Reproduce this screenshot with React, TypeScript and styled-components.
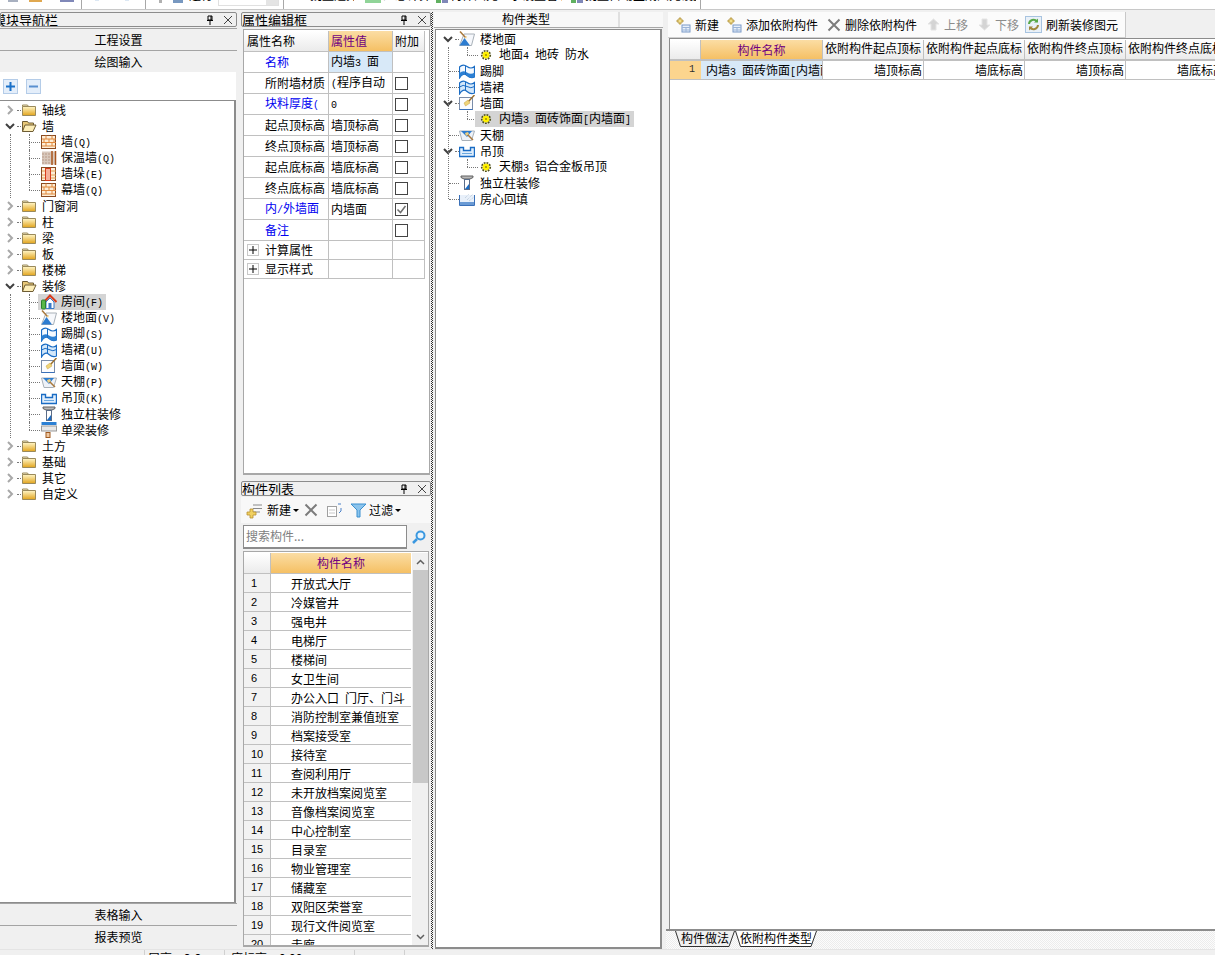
import React from 'react';
import styled, { createGlobalStyle } from 'styled-components';

const Global = createGlobalStyle`
  html, body { margin: 0; padding: 0; background: #f0f0f0; overflow: hidden; }
  * { box-sizing: border-box; }
  body { font: 12px/16px "Noto Sans CJK SC", "Liberation Sans", sans-serif; color: #000; }
`;

const Page = styled.div`
  width: 1215px; height: 955px; display: flex; flex-direction: column; overflow: hidden; background: #f0f0f0;
`;

/* ---------- clipped top toolbar ---------- */
const TopBar = styled.div`
  height: 10px; flex: none; display: flex; align-items: flex-start; background: #fff; border-bottom: 1px solid #c8c8c8; overflow: hidden;
`;
const TopChip = styled.div<{ $ml: number; $w: number; $c: string; $h?: number }>`
  margin-left: ${p => p.$ml}px; width: ${p => p.$w}px; height: ${p => p.$h ?? 3}px; background: ${p => p.$c}; flex: none;
`;
const TopSep = styled.div<{ $ml: number }>`
  margin-left: ${p => p.$ml}px; width: 1px; height: 9px; background: #a8a8a8; flex: none;
`;
const TopText = styled.div<{ $ml: number; $w: number }>`
  margin-left: ${p => p.$ml}px; width: ${p => p.$w}px; height: 2px; overflow: hidden; flex: none; white-space: nowrap;
  & > span { display: block; margin-top: -11px; line-height: 12px; }
`;
const TopInput = styled.div`
  margin-left: 3px; width: 61px; height: 6px; border: 1px solid #e0e0e0; border-top: 0; display: flex; justify-content: flex-end; flex: none;
  & > i { display: block; width: 12px; background: #e4e4e4; }
`;

const Main = styled.div`
  flex: 1; min-height: 0; display: flex; padding-top: 2px;
`;

/* ---------- common ---------- */
const TitleBar = styled.div<{ $indent: number }>`
  height: 15px; flex: none; display: flex; align-items: center; border: 1px solid #8c8c8c; border-radius: 2px;
  padding-right: 3px; background: #f0f0f0; font-size: 13px; overflow: hidden; white-space: nowrap;
  & > b { font-weight: 400; flex: 1; margin-left: ${p => p.$indent}px; }
`;
const NavTitle = styled(TitleBar)`
  margin-bottom: 1px;
`;
const ListTitle = styled(TitleBar)`
  margin-top: 6px;
`;
const Tools = styled.span`
  display: flex; align-items: center; gap: 8px; flex: none;
`;
const PinClose = () => (
  <Tools>
    <svg width="10" height="10" viewBox="0 0 10 10"><path d="M3 1h4v4H3zM2 5.500h6M5 6v4" fill="none" stroke="#000" /><path d="M6 1v4" stroke="#000" /></svg>
    <svg width="10" height="10" viewBox="0 0 10 10"><path d="M1 1l8 8M9 1l-8 8" stroke="#444" /></svg>
  </Tools>
);

const Folder = ({ open }: { open?: boolean }) => (
  <svg width="16" height="16" viewBox="0 0 16 16">
    <defs><linearGradient id="fld" x1="0" y1="0" x2="0" y2="1"><stop offset="0" stopColor="#fff6c8" /><stop offset="1" stopColor="#e2a41c" /></linearGradient></defs>
    {open
      ? <><path d="M1.500 13.500V3.500h5l1 1.500h5v2" fill="#e8c878" stroke="#6e5c34" /><path d="M1.500 13.500L4 7h11l-3 6.500z" fill="#fdeeb8" stroke="#6e5c34" /></>
      : <><path d="M1.500 4.500V3h5l1 1.500" fill="#f6eecb" stroke="#9a8a5c" /><path d="M1.500 4.500h13v9h-13z" fill="url(#fld)" stroke="#9a8a5c" /></>}
  </svg>
);

type IconKind = 'wall' | 'insul' | 'pier' | 'room' | 'floor' | 'skirt' | 'dado' | 'face' | 'ceil' | 'hang' | 'col' | 'beam' | 'gear' | 'fill';

const Glyph = ({ k }: { k: IconKind }) => {
  const body: Record<IconKind, React.ReactNode> = {
    wall: <><rect x=".5" y="1.500" width="14" height="13" fill="#fdeed8" stroke="#8a4a20" /><path d="M1 5h14M1 8.500h14M1 12h14M5 1.500v3.500M11 1.500v3.500M3 5v3.500M8 5v3.500M13 5v3.500M5 8.500v3.500M11 8.500v3.500" stroke="#e0883c" fill="none" /></>,
    insul: <><rect x="1" y="1.500" width="13" height="13" fill="#d8c8bc" /><path d="M1 4h9M1 7h9M1 10h9M1 13h9" stroke="#b89a88" strokeDasharray="2 1" /><path d="M11 1v14M14.500 1v14" stroke="#a8541c" strokeWidth="1.500" /></>,
    pier: <><rect x=".5" y="1.500" width="14" height="13" fill="#fdeed8" stroke="#8a4a20" /><path d="M1 5h4M1 9h4M1 12h4M10 5h5M10 9h5M10 12h5" stroke="#e0a050" /><rect x="4.500" y="2.500" width="5" height="12" fill="#f5b098" stroke="#d83c1c" /></>,
    room: <><path d="M3 8L9 1.500L15.500 8" fill="none" stroke="#d83c1c" strokeWidth="2" /><path d="M5 8l4-4 4 4v6.500H5z" fill="#fff" stroke="#3a7ac8" /><rect x="7.500" y="9" width="3" height="5.500" fill="#3a7ac8" /><rect x=".5" y="6" width="4" height="9" rx="1" fill="#58b848" stroke="#2c8030" /></>,
    floor: <><path d="M5 3H15.500L12.500 14.500H.5z" fill="#f6f8fc" stroke="#a8b0b8" /><path d="M5.500 7L11 14.500H.5z" fill="#2c7cd0" /><path d="M1 .5L6.500 6.500" stroke="#a8783c" strokeWidth="1.500" /><path d="M6 6l2-1-1 3z" fill="#f0d080" /></>,
    skirt: <><path d="M.5 4Q4 .5 8 3.500T15.500 3.500V14Q12 16 8 12.500T.5 15z" fill="#f4f9ff" stroke="#1a6cc4" strokeWidth="1.200" /><path d="M.5 10Q4 7 8 9.500T15.500 9.500V14Q12 16 8 12.500T.5 15z" fill="#2c80d4" /><path d="M6.500 3v9" stroke="#1a6cc4" /></>,
    dado: <><path d="M.5 4Q4 .5 8 3.500T15.500 3.500V14Q12 16 8 12.500T.5 15z" fill="#d4e8fa" stroke="#1a6cc4" strokeWidth="1.200" /><path d="M.5 8Q4 5 8 7.500T15.500 7.500" fill="none" stroke="#1a6cc4" /><path d="M6.500 3v9" stroke="#1a6cc4" /></>,
    face: <><rect x=".5" y="2.500" width="13" height="12" fill="#fbfcfe" stroke="#7a8ca8" /><path d="M.5 14.500h13" stroke="#3a70b8" /><path d="M15.500 0L9 7" stroke="#9a7030" strokeWidth="1.500" /><path d="M9 5L5 8l1.500 3L11 8z" fill="#f0d478" stroke="#c8a040" strokeWidth=".5" /></>,
    ceil: <><path d="M.5 4H15.500L12.500 13.500H3z" fill="#eef2f8" stroke="#a8b0b8" /><path d="M2 4H13L8 10z" fill="#2c7cd0" /><path d="M8 7l6 6" stroke="#a8783c" strokeWidth="1.500" /><path d="M6 6l3-1 1 2-3 2z" fill="#f0d080" /></>,
    hang: <><path d="M.5 4.500h4v3h7v-3h4V13.500H.5z" fill="#e0eefc" stroke="#1a6cc4" strokeWidth="1.400" /><path d="M3 10.500h10" stroke="#6aa8e0" /></>,
    col: <><path d="M2 1h12v1.500l-3 1.500H5L2 2.500z" fill="#b8b8b8" stroke="#606060" /><rect x="5.500" y="4.500" width="5" height="10" fill="#fff" stroke="#5a6c88" /><path d="M6 14l4-5v5z" fill="#1a6cc4" /></>,
    beam: <><rect x=".5" y="0" width="15" height="3" fill="#2c80d4" /><rect x=".5" y="4" width="15" height="5" fill="#e8e8e8" stroke="#9a9a9a" /><rect x="5" y="10.500" width="4" height="5" fill="#f0c8a0" stroke="#a05a20" /></>,
    gear: <><circle cx="8" cy="8" r="3.500" fill="#fff000" /><circle cx="8" cy="8" r="4.300" fill="none" stroke="#50501a" strokeWidth="1.600" strokeDasharray="1.800 1.100" /><circle cx="8" cy="8" r="1" fill="#a09000" /></>,
    fill: <><path d="M.5 4v10.500h15V4" fill="#e8f0fa" stroke="#3a70b8" /><path d="M1 11h14v3H1z" fill="#6a9ad4" /><path d="M8 9l6-6M10 10l5-4M6 7l4-4" stroke="#b8c8d8" strokeDasharray="1 1" /></>,
  };
  return <svg width="16" height="16" viewBox="0 0 16 16">{body[k]}</svg>;
};

/* ---------- mixed text: half-width characters take the 6px cell they have in the reference ---------- */
const Hot = styled.span`
  font-family: "Liberation Mono", monospace; font-size: 10px; white-space: pre;
`;
const Mix = ({ s }: { s: string }) => (
  <>
    {s.split(/([\x20-\x7e]+)/).map((part, i) => (i % 2 ? <Hot key={i}>{part}</Hot> : part))}
  </>
);

/* ---------- tree ---------- */
const TreeRow = styled.div<{ $left: number }>`
  height: 16px; display: flex; align-items: center; padding-left: ${p => p.$left}px; white-space: nowrap;
`;
const Twist = styled.span`
  width: 14px; height: 16px; display: flex; align-items: center; justify-content: center; flex: none;
`;
const Stub = styled.span<{ $w: number }>`
  width: ${p => p.$w}px; border-top: 1px dotted #777; flex: none;
`;
const IconSlot = styled.span`
  width: 16px; height: 16px; flex: none; display: block; & > svg { display: block; }
`;
const Label = styled.span`
  margin-left: 5px;
`;
const Chevron = ({ open }: { open?: boolean }) => (
  <svg width="10" height="10" viewBox="0 0 10 10">
    {open
      ? <path d="M1 3l4 4 4-4" fill="none" stroke="#404040" strokeWidth="2" />
      : <path d="M3 1l4 4-4 4" fill="none" stroke="#a8a8a8" strokeWidth="2" />}
  </svg>
);
const BranchGroup = styled.div<{ $ml: number; $line?: boolean }>`
  margin-left: ${p => p.$ml}px;
  border-left: ${p => p.$line ? '1px dotted #777' : '1px solid transparent'};
`;
const Leaf = styled.div<{ $ml: number; $gear?: boolean }>`
  position: relative; height: 16px; margin-left: ${p => p.$ml}px; padding-left: ${p => p.$gear ? 8 : 12}px; display: flex; white-space: nowrap;
  &::before { content: ''; position: absolute; left: 0; top: 0; height: 100%; border-left: 1px dotted #777; }
  &:last-child::before { height: 50%; }
  &::after { content: ''; position: absolute; left: 0; top: 8px; width: 11px; border-top: 1px dotted #777; }
`;
const LeafBody = styled.div<{ $sel?: boolean; $wide?: boolean }>`
  position: relative; z-index: 1; height: 16px; display: flex; align-items: center; margin-left: ${p => p.$wide ? 0 : -3}px;
  padding: 0 3px; background: ${p => p.$sel ? '#d4d4d4' : 'transparent'};
  & > span:last-child { margin-left: ${p => p.$wide ? 5 : 4}px; }
`;

type Node = { t: string; kids?: { t: string; i: IconKind; sel?: boolean }[]; open?: boolean };

const navTree: Node[] = [
  { t: '轴线' },
  { t: '墙', open: true, kids: [{ t: '墙(Q)', i: 'wall' }, { t: '保温墙(Q)', i: 'insul' }, { t: '墙垛(E)', i: 'pier' }, { t: '幕墙(Q)', i: 'wall' }] },
  { t: '门窗洞' }, { t: '柱' }, { t: '梁' }, { t: '板' }, { t: '楼梯' },
  { t: '装修', open: true, kids: [
    { t: '房间(F)', i: 'room', sel: true }, { t: '楼地面(V)', i: 'floor' }, { t: '踢脚(S)', i: 'skirt' }, { t: '墙裙(U)', i: 'dado' },
    { t: '墙面(W)', i: 'face' }, { t: '天棚(P)', i: 'ceil' }, { t: '吊顶(K)', i: 'hang' }, { t: '独立柱装修', i: 'col' }, { t: '单梁装修', i: 'beam' },
  ] },
  { t: '土方' }, { t: '基础' }, { t: '其它' }, { t: '自定义' },
];

/* ---------- left column ---------- */
const LeftCol = styled.div`
  width: 237px; flex: none; display: flex; flex-direction: column; margin-bottom: 2px;
`;
const NavButton = styled.div`
  height: 22px; flex: none; display: flex; align-items: center; justify-content: center; background: #f0f0f0; border-top: 1px solid #a4a4a4;
`;
const ExpandBar = styled.div`
  height: 28px; flex: none; background: #fff; display: flex; align-items: center; gap: 8px; padding-left: 3px; margin-right: 1px;
`;
const NavTreeBox = styled.div`
  flex: 1; min-height: 0; background: #fff; border: 1px solid #8c8c8c; border-left: 0; border-right-width: 2px; padding-top: 1px; margin-right: 1px; overflow: hidden;
`;
const SquareBtn = ({ minus }: { minus?: boolean }) => (
  <svg width="15" height="15" viewBox="0 0 15 15">
    <rect x=".5" y=".5" width="14" height="14" fill="#e4eefa" stroke="#b4cce8" />
    <path d={minus ? 'M3 7.500h9' : 'M3 7.500h9M7.500 3v9'} stroke={minus ? '#5a90d0' : '#1a70c8'} strokeWidth="2" />
  </svg>
);

/* ---------- middle column ---------- */
const MidCol = styled.div`
  width: 190px; margin-left: 4px; flex: none; display: flex; flex-direction: column;
`;
const PropBox = styled.div`
  height: 446px; margin: 2px 1px 0 2px; flex: none; background: #fff; border: 1px solid #a8a8a8; border-bottom-width: 2px; padding: 1px 0 0 0;
`;
const PropRow = styled.div<{ $h: number }>`
  display: grid; grid-template-columns: 85px 64px 32px; height: ${p => p.$h}px; width: 181px;
`;
const PropCell = styled.div<{ $blue?: boolean; $head?: boolean; $val?: boolean; $first?: boolean }>`
  border-right: 1px solid #c0c0c0; border-bottom: 1px solid #c0c0c0; display: flex; align-items: center; overflow: hidden; white-space: pre;
  padding-left: ${p => p.$head ? 3 : p.$first ? 21 : p.$val ? 2 : 0}px;
  color: ${p => p.$blue ? '#0000f0' : '#000'};
`;
const HeadGrad = styled(PropCell)`
  background: linear-gradient(#ffffff, #ebebeb);
`;
const OrangeCell = styled(PropCell)`
  background: linear-gradient(#fbdda4, #f5c064); color: #700080;
`;
const NameVal = styled(PropCell)`
  background: #d8e9f8;
`;
const CheckCell = styled(PropCell)`
  padding-left: 2px;
`;
const Check = styled.span`
  width: 13px; height: 13px; background: #fff; border: 1px solid #444; display: flex; align-items: center; justify-content: center;
`;
const ExpandCell = styled(PropCell)`
  padding-left: 3px; gap: 6px;
`;
const PlusBox = styled.span`
  width: 12px; height: 12px; border: 1px solid #c8c8c8; background: #fdfdfd; display: flex; align-items: center; justify-content: center; flex: none;
`;

const ListTools = styled.div`
  height: 26px; margin: 1px 0 0 0; flex: none; display: flex; align-items: center; padding-left: 5px; background: #f8f8f8;
`;
const ListTool = styled.span<{ $ml: number; $gap?: number }>`
  display: flex; align-items: center; gap: ${p => p.$gap ?? 1}px; margin-left: ${p => p.$ml}px;
`;
const Caret = styled.i`
  width: 0; height: 0; margin-left: -2px; border-left: 3px solid transparent; border-right: 3px solid transparent; border-top: 3px solid #000;
`;
const SearchRow = styled.div`
  height: 25px; margin: 1px 0 0 2px; flex: none; display: flex; align-items: center;
`;
const SearchBox = styled.div`
  width: 164px; height: 24px; background: #fff; border: 1px solid #8c8c8c; border-bottom-width: 2px; color: #808080; padding-left: 2px; display: flex; align-items: center;
`;
const SearchIcon = styled.span`
  margin-left: 4px; width: 16px; height: 16px; display: block;
`;
const ListBox = styled.div`
  flex: 1; min-height: 0; margin: 2px; background: #fff; border: 1px solid #a8a8a8; border-bottom-width: 2px; padding: 1px 0 0 0; display: flex; overflow: hidden;
`;
const ListTable = styled.div`
  width: 167px; flex: none;
`;
const ListHead = styled.div`
  display: grid; grid-template-columns: 27px 140px; height: 21px;
`;
const ListCorner = styled.div`
  background: linear-gradient(#fff, #ebebeb); border-right: 1px solid #c0c0c0; border-bottom: 1px solid #c0c0c0;
`;
const ListHeadName = styled.div`
  background: linear-gradient(#fbdda4, #f5c064); color: #700080; text-align: center; line-height: 20px; border-bottom: 1px solid #c0c0c0;
`;
const ListRow = styled.div`
  display: grid; grid-template-columns: 27px 140px; height: 19px;
`;
const ListNum = styled.div`
  background: #f2f2f2; border-right: 1px solid #c0c0c0; border-bottom: 1px solid #c0c0c0; padding-left: 7px; line-height: 18px; font-family: "Liberation Sans", sans-serif; font-size: 11px;
`;
const ListName = styled.div`
  border-bottom: 1px solid #c0c0c0; padding-left: 20px; line-height: 20px; white-space: nowrap; overflow: hidden;
`;
const ScrollTrack = styled.div`
  width: 17px; margin-left: 1px; flex: none; background: #f0f0f0; display: flex; flex-direction: column;
`;
const ScrollBtn = styled.div`
  height: 17px; flex: none; display: flex; align-items: center; justify-content: center;
`;
const ScrollThumb = styled.div`
  height: 213px; flex: none; margin: 0 1px; background: #c8c8c8;
`;
const ScrollRest = styled.div`
  flex: 1;
`;
const Hatch = styled.div`
  width: 2px; flex: none;
  background: repeating-conic-gradient(#303030 0 25%, #f8f8f8 0 50%) 0 0/2px 2px;
`;

/* ---------- type column ---------- */
const TypeCol = styled.div`
  width: 229px; margin-left: 1px; flex: none; display: flex; flex-direction: column;
`;
const TypeTitle = styled.div`
  height: 16px; flex: none; display: grid; grid-template-columns: 186px 1fr; border-bottom: 1px solid #a8a8a8; background: #f8f8f8;
  & > span { text-align: center; line-height: 14px; border-right: 2px solid #e0e0e0; }
`;
const TypeBox = styled.div`
  flex: 1; min-height: 0; margin: 1px 1px 0 1px; background: #fff; border: 1px solid #8c8c8c; border-right-width: 2px; border-bottom-width: 2px; padding-top: 1px; position: relative; overflow: hidden;
  &::before { content: ''; position: absolute; left: 12px; top: 17px; height: 152px; border-left: 1px dotted #777; }
`;

/* ---------- right column ---------- */
const RightCol = styled.div`
  flex: 1; min-width: 0; margin-left: 3px; display: flex; flex-direction: column;
`;
const RightTools = styled.div`
  height: 26px; flex: none; width: 458px; margin-left: 2px; background: #fbfbfb; border-right: 1px solid #c8c8c8; border-bottom: 1px solid #d0d0d0; display: flex; align-items: center; padding-left: 7px; white-space: nowrap;
`;
const RightTool = styled.span<{ $off?: boolean; $ml: number }>`
  display: flex; align-items: center; gap: 4px; margin-left: ${p => p.$ml}px; color: ${p => p.$off ? '#8c8c8c' : '#000'};
`;
const GridBox = styled.div`
  flex: 1; min-height: 0; margin-left: 3px; background: #fff; border-left: 1px solid #8c8c8c; border-top: 1px solid #8c8c8c; overflow: hidden; padding-top: 1px;
`;
const DepRow = styled.div<{ $h: number }>`
  display: grid; grid-template-columns: 31px 122px 101px 101px 101px 101px; height: ${p => p.$h}px; white-space: nowrap;
`;
const DepHead = styled.div<{ $hot?: boolean }>`
  background: ${p => p.$hot ? 'linear-gradient(#fbdda4, #f5c064)' : 'linear-gradient(#ffffff, #ebebeb)'};
  color: ${p => p.$hot ? '#700080' : '#000'}; line-height: ${p => p.$hot ? 20 : 15}px; text-align: center; overflow: hidden;
  border-right: 1px solid #c0c0c0; border-bottom: 2px solid #c0c0c0;
`;
const DepNum = styled.div`
  background: #fcd58e; text-align: right; padding-right: 6px; color: #303030; font: 10px/18px "Liberation Mono", monospace; border-bottom: 1px solid #c0c0c0;
`;
const DepName = styled.div`
  background: #d8e9f8; padding-left: 5px; line-height: 18px; overflow: hidden; border-right: 1px solid #c0c0c0; border-bottom: 1px solid #c0c0c0;
`;
const DepVal = styled.div`
  text-align: right; padding-right: 1px; line-height: 18px; overflow: hidden; border-right: 1px solid #c0c0c0; border-bottom: 1px solid #c0c0c0;
`;
const TabStrip = styled.div`
  height: 20px; flex: none; display: flex; padding-left: 9px; border-top: 2px solid #8c8c8c;
  background: repeating-conic-gradient(#ececec 0 25%, #fcfcfc 0 50%) 0 0/2px 2px;
`;
const Tab = styled.div<{ $w: number }>`
  position: relative; width: ${p => p.$w}px; height: 16px; text-align: center; line-height: 13px; flex: none;
  & > svg { position: absolute; left: 0; top: 0; }
  & > span { position: relative; }
`;

/* ---------- status ---------- */
const Status = styled.div`
  height: 6px; flex: none; display: flex; border-top: 1px solid #e4e4e4; overflow: hidden; background: #f0f0f0;
`;
const StatusCell = styled.div<{ $w: number; $pl?: number }>`
  width: ${p => p.$w}px; flex: none; border-right: 1px solid #d0d0d0; padding: 2px 0 0 ${p => p.$pl ?? 3}px; line-height: 12px; white-space: nowrap;
`;

/* ---------- data ---------- */
const props: { n: string; v: string; blue?: boolean; box?: boolean; on?: boolean; sel?: boolean }[] = [
  { n: '名称', v: '内墙3 面', blue: true, sel: true },
  { n: '所附墙材质', v: '(程序自动', box: true },
  { n: '块料厚度(', v: '0', blue: true, box: true },
  { n: '起点顶标高', v: '墙顶标高', box: true },
  { n: '终点顶标高', v: '墙顶标高', box: true },
  { n: '起点底标高', v: '墙底标高', box: true },
  { n: '终点底标高', v: '墙底标高', box: true },
  { n: '内/外墙面', v: '内墙面', blue: true, box: true, on: true },
  { n: '备注', v: '', blue: true, box: true },
];
const listNames = ['开放式大厅', '冷媒管井', '强电井', '电梯厅', '楼梯间', '女卫生间', '办公入口 门厅、门斗', '消防控制室兼值班室', '档案接受室', '接待室', '查阅利用厅', '未开放档案阅览室', '音像档案阅览室', '中心控制室', '目录室', '物业管理室', '储藏室', '双阳区荣誉室', '现行文件阅览室', '走廊'];

const GearLeaf = ({ text, sel }: { text: string; sel?: boolean }) => (
  <BranchGroup $ml={0}>
    <Leaf $ml={30} $gear>
      <LeafBody $sel={sel} $wide>
        <IconSlot><Glyph k="gear" /></IconSlot>
        <span><Mix s={text} /></span>
      </LeafBody>
    </Leaf>
  </BranchGroup>
);
const TypeTop = ({ i, t, open }: { i: IconKind; t: string; open?: boolean }) => (
  <TreeRow $left={open ? 5 : 13}>
    {open ? <><Twist><Chevron open /></Twist><Stub $w={4} /></> : <Stub $w={10} />}
    <IconSlot><Glyph k={i} /></IconSlot>
    <Label>{t}</Label>
  </TreeRow>
);

const AddDoc = () => (
  <svg width="16" height="16" viewBox="0 0 16 16">
    <path d="M2 3h2V1h2v2h2v2H6v2H4V5H2z" fill="#f4e08a" stroke="#b09038" strokeWidth=".8" />
    <rect x="7" y="8" width="8" height="7" fill="#e8f0fa" stroke="#7a9ac8" /><path d="M7 10.500h8M7 13h8M11 10v5" stroke="#9ab4d8" />
  </svg>
);
const Cross = () => (
  <svg width="14" height="14" viewBox="0 0 14 14"><path d="M1.500 1.500l11 11M12.500 1.500l-11 11" stroke="#7c7c7c" strokeWidth="2" /></svg>
);
const Arrow = ({ down }: { down?: boolean }) => (
  <svg width="13" height="13" viewBox="0 0 13 13"><path d={down ? 'M4 1h5v6h3L6.500 12 1 7h3z' : 'M4 12h5V6h3L6.500 1 1 6h3z'} fill="#d4d4d4" stroke="#e4e4e4" /></svg>
);
const Refresh = () => (
  <svg width="17" height="17" viewBox="0 0 17 17">
    <rect x=".5" y=".5" width="16" height="16" fill="#eaf1f8" stroke="#a8c4e0" />
    <path d="M4 8a4.500 4.500 0 0 1 8-2.500" fill="none" stroke="#58a848" strokeWidth="2" /><path d="M13 2.500v4h-4z" fill="#58a848" />
    <path d="M13 9a4.500 4.500 0 0 1-8 2.500" fill="none" stroke="#a0883c" strokeWidth="2" /><path d="M4 14.500v-4h4z" fill="#a0883c" />
  </svg>
);
const TabShape = ({ w, on }: { w: number; on?: boolean }) => (
  <svg width={w} height="16" viewBox={`0 0 ${w} 16`}>
    <path d={`M.5 0L5.500 15.500H${w - 6}L${w - 0.5} 0`} fill={on ? '#fff' : '#f0f0f0'} stroke="#303030" />
  </svg>
);

export default function App() {
  return (
    <Page>
      <Global />
      <TopBar>
        <TopChip $ml={8} $w={10} $c="#a8b0c0" $h={2} />
        <TopChip $ml={11} $w={13} $c="#e0a850" $h={2} />
        <TopChip $ml={18} $w={14} $c="#8088b8" $h={2} />
        <TopSep $ml={7} />
        <TopChip $ml={13} $w={4} $c="#dce8f4" $h={1} />
        <TopChip $ml={26} $w={4} $c="#dce8f4" $h={1} />
        <TopSep $ml={16} />
        <TopChip $ml={13} $w={3} $c="#b0b0b0" $h={3} />
        <TopChip $ml={11} $w={10} $c="#7898c0" $h={3} />
        <TopText $ml={6} $w={26}><span>运行</span></TopText>
        <TopInput><i /></TopInput>
        <TopSep $ml={4} />
        <TopText $ml={26} $w={44}><span>批量选择</span></TopText>
        <TopChip $ml={11} $w={16} $c="#90d498" $h={3} />
        <TopText $ml={2} $w={46}><span>汇总计算</span></TopText>
        <TopChip $ml={7} $w={5} $c="#60b060" $h={3} />
        <TopChip $ml={1} $w={6} $c="#8088b8" $h={3} />
        <TopText $ml={2} $w={112}><span>构件图元显示设置管理</span></TopText>
        <TopChip $ml={9} $w={5} $c="#60b060" $h={3} />
        <TopChip $ml={1} $w={6} $c="#8088b8" $h={3} />
        <TopText $ml={2} $w={111}><span>批量自动生成图元设置</span></TopText>
        <TopSep $ml={4} />
      </TopBar>
      <Main>
        <LeftCol>
          <NavTitle $indent={-8}><b>模块导航栏</b><PinClose /></NavTitle>
          <NavButton>工程设置</NavButton>
          <NavButton>绘图输入</NavButton>
          <ExpandBar><SquareBtn /><SquareBtn minus /></ExpandBar>
          <NavTreeBox>
            {navTree.map(n => (
              <React.Fragment key={n.t}>
                <TreeRow $left={3}>
                  <Twist><Chevron open={n.open} /></Twist>
                  <Stub $w={4} />
                  <IconSlot><Folder open={n.open} /></IconSlot>
                  <Label>{n.t}</Label>
                </TreeRow>
                {n.kids && (
                  <BranchGroup $ml={10} $line>
                    {n.kids.map(k => (
                      <Leaf $ml={18} key={k.t}>
                        <LeafBody $sel={k.sel}>
                          <IconSlot><Glyph k={k.i} /></IconSlot>
                          <span><Mix s={k.t} /></span>
                        </LeafBody>
                      </Leaf>
                    ))}
                  </BranchGroup>
                )}
              </React.Fragment>
            ))}
          </NavTreeBox>
          <NavButton>表格输入</NavButton>
          <NavButton>报表预览</NavButton>
        </LeftCol>

        <MidCol>
          <TitleBar $indent={0}><b>属性编辑框</b><PinClose /></TitleBar>
          <PropBox>
            <PropRow $h={21}>
              <HeadGrad $head>属性名称</HeadGrad>
              <OrangeCell $val>属性值</OrangeCell>
              <HeadGrad $val>附加</HeadGrad>
            </PropRow>
            {props.map(p => (
              <PropRow $h={21} key={p.n}>
                <PropCell $first $blue={p.blue}><span><Mix s={p.n} /></span></PropCell>
                {p.sel
                  ? <NameVal $val><span><Mix s={p.v} /></span></NameVal>
                  : <PropCell $val><span><Mix s={p.v} /></span></PropCell>}
                <CheckCell>
                  {p.box && (
                    <Check>
                      {p.on && <svg width="11" height="11" viewBox="0 0 11 11"><path d="M1.500 5.500L4.500 8.500L9.500 2" fill="none" stroke="#707070" strokeWidth="1.500" /></svg>}
                    </Check>
                  )}
                </CheckCell>
              </PropRow>
            ))}
            {['计算属性', '显示样式'].map(t => (
              <PropRow $h={19} key={t}>
                <ExpandCell>
                  <PlusBox><svg width="8" height="8" viewBox="0 0 8 8"><path d="M0 4h8M4 0v8" stroke="#000" /></svg></PlusBox>
                  {t}
                </ExpandCell>
                <PropCell />
                <PropCell />
              </PropRow>
            ))}
          </PropBox>
          <ListTitle $indent={0}><b>构件列表</b><PinClose /></ListTitle>
          <ListTools>
            <ListTool $ml={0} $gap={4}>
              <svg width="17" height="17" viewBox="0 0 17 17"><path d="M7 3h9M7 6.500h9M7 10h7" stroke="#8a8a8a" /><path d="M1 10h3V7h3v3h3v3H7v3H4v-3H1z" fill="#f0d060" stroke="#b89030" strokeWidth=".8" /></svg>
              新建<Caret />
            </ListTool>
            <ListTool $ml={5}><Cross /></ListTool>
            <ListTool $ml={8}>
              <svg width="17" height="15" viewBox="0 0 17 15"><rect x="1.500" y="3.500" width="9" height="10" fill="#fff" stroke="#a0a0a0" /><path d="M3 7h6M3 10h6" stroke="#c8c8c8" /><path d="M12 1h3M15 5v3l-2 2" fill="none" stroke="#4a80c8" /></svg>
            </ListTool>
            <ListTool $ml={7}>
              <svg width="17" height="15" viewBox="0 0 17 15"><path d="M1 1h15l-6 6v7H7V7z" fill="#8cc4ec" stroke="#3a90d0" /></svg>
            </ListTool>
            <ListTool $ml={2} $gap={4}>过滤<Caret /></ListTool>
          </ListTools>
          <SearchRow>
            <SearchBox>搜索构件...</SearchBox>
            <SearchIcon>
              <svg width="16" height="16" viewBox="0 0 16 16"><circle cx="9.500" cy="6.500" r="4" fill="#e8f4fc" stroke="#3a98e0" strokeWidth="2" /><path d="M6 10l-4 4" stroke="#3a98e0" strokeWidth="2.500" /></svg>
            </SearchIcon>
          </SearchRow>
          <ListBox>
            <ListTable>
              <ListHead><ListCorner /><ListHeadName>构件名称</ListHeadName></ListHead>
              {listNames.map((n, i) => (
                <ListRow key={n}><ListNum>{i + 1}</ListNum><ListName><Mix s={n} /></ListName></ListRow>
              ))}
            </ListTable>
            <ScrollTrack>
              <ScrollBtn><svg width="9" height="6" viewBox="0 0 9 6"><path d="M1 5l3.500-3.500L8 5" fill="none" stroke="#606060" strokeWidth="1.500" /></svg></ScrollBtn>
              <ScrollThumb />
              <ScrollRest />
              <ScrollBtn><svg width="9" height="6" viewBox="0 0 9 6"><path d="M1 1l3.500 3.500L8 1" fill="none" stroke="#606060" strokeWidth="1.500" /></svg></ScrollBtn>
            </ScrollTrack>
          </ListBox>
        </MidCol>

        <Hatch />

        <TypeCol>
          <TypeTitle><span>构件类型</span></TypeTitle>
          <TypeBox>
            <TypeTop i="floor" t="楼地面" open />
            <GearLeaf text="地面4 地砖 防水" />
            <TypeTop i="skirt" t="踢脚" />
            <TypeTop i="dado" t="墙裙" />
            <TypeTop i="face" t="墙面" open />
            <GearLeaf text="内墙3 面砖饰面[内墙面]" sel />
            <TypeTop i="ceil" t="天棚" />
            <TypeTop i="hang" t="吊顶" open />
            <GearLeaf text="天棚3 铝合金板吊顶" />
            <TypeTop i="col" t="独立柱装修" />
            <TypeTop i="fill" t="房心回填" />
          </TypeBox>
        </TypeCol>

        <RightCol>
          <RightTools>
            <RightTool $ml={0}><AddDoc />新建</RightTool>
            <RightTool $ml={7}><AddDoc />添加依附构件</RightTool>
            <RightTool $ml={9}><Cross />删除依附构件</RightTool>
            <RightTool $ml={10} $off><Arrow />上移</RightTool>
            <RightTool $ml={10} $off><Arrow down />下移</RightTool>
            <RightTool $ml={6}><Refresh />刷新装修图元</RightTool>
          </RightTools>
          <GridBox>
            <DepRow $h={21}>
              <DepHead />
              <DepHead $hot>构件名称</DepHead>
              <DepHead>依附构件起点顶标</DepHead>
              <DepHead>依附构件起点底标</DepHead>
              <DepHead>依附构件终点顶标</DepHead>
              <DepHead>依附构件终点底标</DepHead>
            </DepRow>
            <DepRow $h={19}>
              <DepNum>1</DepNum>
              <DepName><Mix s="内墙3 面砖饰面[内墙面]" /></DepName>
              <DepVal>墙顶标高</DepVal>
              <DepVal>墙底标高</DepVal>
              <DepVal>墙顶标高</DepVal>
              <DepVal>墙底标高</DepVal>
            </DepRow>
          </GridBox>
          <TabStrip>
            <Tab $w={60}><TabShape w={60} /><span>构件做法</span></Tab>
            <Tab $w={82}><TabShape w={82} on /><span>依附构件类型</span></Tab>
          </TabStrip>
        </RightCol>
      </Main>
      <Status>
        <StatusCell $w={145}>&nbsp;</StatusCell>
        <StatusCell $w={80}>层高：3.6</StatusCell>
        <StatusCell $w={130} $pl={6}>底标高：0.00</StatusCell>
        <StatusCell $w={50}>&nbsp;</StatusCell>
      </Status>
    </Page>
  );
}
